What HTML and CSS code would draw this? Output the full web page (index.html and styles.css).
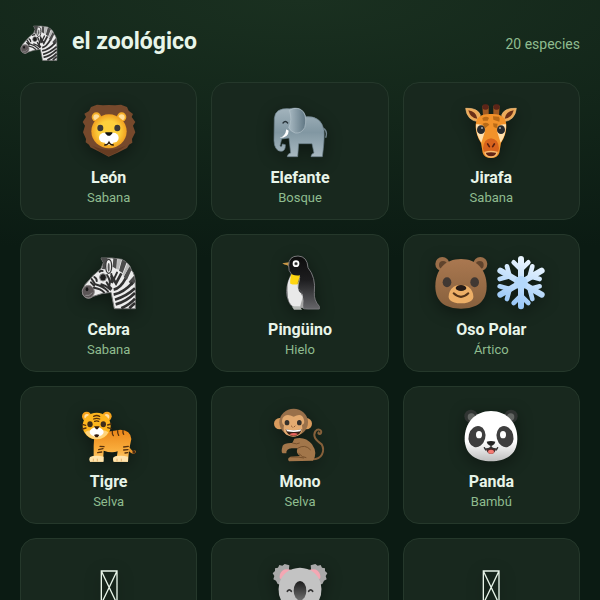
FILE: index.html
```html
<!DOCTYPE html>
<html lang="es">
<head>
  <meta charset="UTF-8" />
  <meta name="viewport" content="width=device-width, initial-scale=1.0" />
  <title>el zoológico</title>
  <link rel="stylesheet" href="styles.css">
</head>
<body>
  <svg class="sprites" aria-hidden="true">
    <defs>
      <radialGradient id="lion-face"><stop offset="0.6" stop-color="#fdd03c" /><stop offset="1" stop-color="#f0a020" /></radialGradient>
      <linearGradient id="elephant-skin" x2="0" y2="1"><stop offset="0" stop-color="#a3b4bd" /><stop offset="0.5" stop-color="#8197a2" /><stop offset="1" stop-color="#a9b9c1" /></linearGradient>
      <linearGradient id="elephant-ear"><stop offset="0" stop-color="#a9bac3" /><stop offset="1" stop-color="#5f7683" /></linearGradient>
      <linearGradient id="bear-face" x2="0" y2="1"><stop offset="0" stop-color="#aa7850" /><stop offset="1" stop-color="#87603d" /></linearGradient>
      <linearGradient id="snow" gradientUnits="userSpaceOnUse" x1="110" y1="10" x2="60" y2="160"><stop offset="0" stop-color="#eef7ff" /><stop offset="1" stop-color="#93c4f7" /></linearGradient>
      <linearGradient id="penguin-back" x2="0" y2="1"><stop offset="0" stop-color="#0c0c0c" /><stop offset="0.45" stop-color="#1d1d1f" /><stop offset="1" stop-color="#66666a" /></linearGradient>
      <linearGradient id="tiger-fur" x2="0" y2="1"><stop offset="0" stop-color="#ea8618" /><stop offset="0.6" stop-color="#f9ab3a" /><stop offset="1" stop-color="#ffcf75" /></linearGradient>
      <linearGradient id="panda-face" x2="0" y2="1"><stop offset="0.6" stop-color="#fff" /><stop offset="1" stop-color="#bdbdbd" /></linearGradient>
      <linearGradient id="koala-nose" x2="0" y2="1"><stop offset="0" stop-color="#1c1c1c" /><stop offset="1" stop-color="#6e6e6e" /></linearGradient>
    </defs>

    <symbol id="leon" viewBox="0 0 168 168">
      <path fill="#76492c" d="M83 161 58 148 28 133 24 125 14 118 15 108 6 88 12 68 5 57 15 42 10 32 24 24 30 12 48 5 66 7 83 6 102 7 120 5 138 12 143 23 156 33 152 42 163 57 156 68 163 88 153 108 154 119 144 125 138 135 108 150Z" />
      <path fill="#663c22" d="M34 128Q60 140 84 140T134 128L108 148 83 159 58 147Z" />
      <circle cx="46" cy="42" r="14" fill="#f5ae27" />
      <circle cx="122" cy="42" r="14" fill="#f5ae27" />
      <circle cx="46" cy="43" r="9" fill="#ffdf9b" />
      <circle cx="122" cy="43" r="9" fill="#ffdf9b" />
      <ellipse cx="84" cy="85" rx="53" ry="51" fill="url(#lion-face)" />
      <ellipse cx="58" cy="75" rx="9" ry="10" fill="#3c3a36" />
      <ellipse cx="109" cy="75" rx="9" ry="10" fill="#3c3a36" />
      <ellipse cx="70" cy="104" rx="16" ry="15" fill="#fff" />
      <ellipse cx="97" cy="104" rx="16" ry="15" fill="#fff" />
      <path fill="#fff" d="M69 108h30l-5 17H74z" />
      <path fill="#111" d="M73 88h21q2 4-7 10h-7q-9-6-7-10z" />
      <path fill="none" stroke="#2a1a0a" stroke-width="4" stroke-linecap="round" d="M71 126q10 0 13-8 3 8 13 8" />
    </symbol>

    <symbol id="elefante" viewBox="0 0 168 168">
      <path fill="none" stroke="#74868f" stroke-width="4" d="M154 76q14 8 7 28" />
      <path fill="url(#elephant-skin)" stroke="#6b7f8a" stroke-width="2" d="M7 45Q10 14 52 17 90 8 102 41 148 38 156 82 158 110 151 161H117q0-8 9-11l-6-28H80l-3 39H46q0-8 10-11l-5-45-22 3-5 20q5 8 7-5l9 2q1 20-13 20-20-2-21-32z" />
      <path fill="url(#elephant-ear)" stroke="#b4c3ca" stroke-width="2" d="M52 22Q78 8 94 26 106 46 98 74 88 92 70 90 56 86 50 74 62 50 52 22z" />
      <path fill="none" stroke="#263238" stroke-width="4" stroke-linecap="round" d="M33 60q7-9 14 0" />
      <path fill="#fff" d="M22 105q18-4 21-26l7 4q0 21-28 22z" />
    </symbol>

    <symbol id="jirafa" viewBox="0 0 168 168">
      <g id="jirafa-mitad">
        <path fill="#edaa59" stroke="#f7c37f" stroke-width="2" d="M8 16Q44 14 52 36L45 56Q12 52 8 16z" />
        <path fill="#6a2e16" d="M16 22q24 4 27 25-21-1-27-25z" />
        <path fill="#a05a22" d="M58 8h19v32H60z" />
        <rect x="58" y="4" width="19" height="16" rx="7" fill="#5d2418" />
      </g>
      <use href="#jirafa-mitad" transform="matrix(-1 0 0 1 168 0)" />
      <path fill="#f2922a" d="M84 33Q132 31 130 72 129 98 114 120L109 149Q104 165 84 165T59 149L54 120Q39 98 38 72 36 31 84 33z" />
      <path fill="#ffe0ad" d="M39 64Q67 60 65 88L55 119Q38 95 39 64zM129 64Q101 60 103 88l10 31q17-24 16-55z" />
      <path fill="#b96a17" d="M58 45q12-7 20 0l-4 8H60zM90 40l18 1q4 6 1 15l-18-6zM59 62q14-6 20 3l-13 11zM90 61l14 1-3 14-9-4z" />
      <path fill="#d8631c" d="M84 106Q62 108 60 136q2 20 24 22 22-2 24-22-2-28-24-30z" />
      <ellipse cx="54" cy="80" rx="12" ry="13" fill="#282a2d" />
      <ellipse cx="114" cy="80" rx="12" ry="13" fill="#282a2d" />
      <circle cx="57" cy="75" r="3" fill="#aaa" />
      <circle cx="111" cy="75" r="3" fill="#aaa" />
      <path fill="none" stroke="#572010" stroke-width="5" stroke-linecap="round" d="M74 123l5 8M94 123l-5 8" />
      <path fill="#612416" stroke="#f8bb70" stroke-width="4" d="M66 148q18-5 36 0-2 13-18 14-16-1-18-14z" />
    </symbol>

    <symbol id="cebra" viewBox="0 0 168 168">
      <path fill="#ececec" stroke="#777" stroke-width="3" stroke-linejoin="round" d="M4 106 12 89 37 61 60 41 67 23 60 9H92L122 13Q147 25 151 45 163 55 163 90V161H100L92 121 90 112 62 116 37 124Q22 136 9 124 3 118 4 106z" />
      <path fill="#4c4c4c" d="M60 9h20l-4 10-4 24-9-1 4-19zM97 10l11 2-2 30-11-7zM123 14l14 8-12 32-11-7zM145 34l6 12-13 28-10-8zM159 62l4 18-10 12-10-12z" />
      <path fill="#b9b9b9" d="M109 12l12 2-8 30-6-2zM139 25l7 9-18 30-2-8z" />
      <ellipse cx="83" cy="34" rx="9" ry="21" fill="#eee" stroke="#333" stroke-width="4" />
      <ellipse cx="83" cy="37" rx="3" ry="13" fill="#555" />
      <ellipse cx="22" cy="110" rx="18" ry="19" fill="#5b5556" stroke="#8c8788" stroke-width="3" />
      <ellipse cx="18" cy="103" rx="4" ry="6" fill="#151515" />
      <path fill="none" stroke="#aaa" stroke-width="2" d="M13 121q12 4 21-8" />
      <g fill="none" stroke="#303030" stroke-width="6" stroke-linecap="round">
        <path d="M40 66q8 5 7 12M32 72l10 15M56 50q6-4 9-2M30 82l9 10M39 98q20 3 30 14M43 88q24 6 38 21M61 88q16 4 27 16M77 82q5 12 14 18M78 60q12 18 7 32M91 57l1 24M108 53L94 82" />
      </g>
      <g fill="none" stroke="#303030" stroke-width="8">
        <path d="M91 62l14 23 16-30M98 104q20-4 36-34M98 119q30-6 57-36M102 134q34-10 60-34M104 148q32-8 58-34M121 160q26-12 41-29M145 160l17-16" />
      </g>
      <ellipse cx="66" cy="67" rx="10" ry="11" fill="#1e1e1e" stroke="#888" stroke-width="3" />
    </symbol>

    <symbol id="pinguino" viewBox="0 0 168 168">
      <path fill="#c99747" d="M31 25l20-3 2 14q-5 0-7-5-11-1-15-6z" />
      <path fill="url(#penguin-back)" stroke="#77777a" stroke-width="3" d="M50 31Q50 3 78 3 106 4 108 38 132 67 127 112 125 136 142 154V162H108Q93 163 90 157L56 150Q40 124 45 96 47 80 58 57 49 49 50 31z" />
      <path fill="#e9e9e9" d="M58 60Q44 80 46 108 46 147 68 158L91 157Q97 142 91 117 75 110 80 91L84 66z" />
      <path fill="#ffd510" d="M58 57q11 6 26 4l-5 25q-10 5-24 0-2-8 3-29z" />
      <path fill="#a5a5a5" d="M91 105q3 18-4 40l-3 12 10 2z" />
      <path fill="#b6b9b6" d="M59 154h24l7 10H66z" />
      <circle cx="72" cy="26" r="10" fill="#fff" />
      <circle cx="72" cy="26" r="5" fill="#555" />
      <circle cx="72" cy="26" r="2" fill="#000" />
      <path fill="none" stroke="#59595c" stroke-width="2" d="M84 66q-8 15-5 33 11 10 11 22" />
    </symbol>

    <symbol id="oso" viewBox="0 0 168 168">
      <circle cx="28" cy="27" r="21" fill="#9b6e49" />
      <circle cx="142" cy="27" r="21" fill="#9b6e49" />
      <circle cx="30" cy="30" r="12" fill="#60432c" />
      <circle cx="140" cy="30" r="12" fill="#60432c" />
      <path fill="url(#bear-face)" d="M84 12C132 12 161 45 161 94 161 142 130 161 84 161S7 142 7 94C7 45 36 12 84 12z" />
      <ellipse cx="42" cy="82" rx="13" ry="15" fill="#403833" />
      <ellipse cx="125" cy="82" rx="13" ry="15" fill="#403833" />
      <path fill="#edaf67" d="M84 90Q108 88 118 110 132 144 84 145 36 144 50 110 60 88 84 90z" />
      <ellipse cx="84" cy="99" rx="16" ry="9" fill="#251b17" />
      <path fill="none" stroke="#533218" stroke-width="6" stroke-linecap="round" d="M62 115q22 21 44 0" />
    </symbol>

    <symbol id="nieve" viewBox="0 0 168 168">
      <g fill="none" stroke="url(#snow)" stroke-width="18" stroke-linecap="round" stroke-linejoin="round">
        <path d="M84 12V154M22 47L146 119M22 119L146 47" />
        <path stroke-width="14" d="M62 22l22 22 22-22M62 144l22-22 22 22M20 72l30-8-8-30M118 132l-8-30 30-8M20 94l30 8-8 30M118 34l-8 30 30 8" />
      </g>
      <circle cx="84" cy="83" r="20" fill="#b4d8fb" />
    </symbol>

    <symbol id="tigre" viewBox="0 0 168 168">
      <path fill="none" stroke="#e9972c" stroke-width="8" stroke-linecap="round" d="M143 125q12 16 18 9" />
      <circle cx="159" cy="135" r="5" fill="#4c2c14" />
      <path fill="url(#tiger-fur)" d="M40 84Q80 72 118 68 149 69 151 96L144 130 141 164H98Q93 150 108 146L110 133Q92 140 68 131L66 164H27Q22 151 38 146L38 116z" />
      <path fill="#ffe4ad" d="M27 150q18-7 41-1v15H27q-5-7 0-14zM98 150q18-7 43-1v15H98q-5-7 0-14z" />
      <circle cx="17" cy="28" r="14" fill="#f6a31b" />
      <circle cx="78" cy="28" r="14" fill="#f6a31b" />
      <circle cx="18" cy="29" r="8" fill="#ffe0a4" />
      <circle cx="77" cy="29" r="8" fill="#ffe0a4" />
      <ellipse cx="47" cy="57" rx="42" ry="40" fill="#fdb51e" />
      <path fill="#ffd47c" d="M12 76q10-8 20-6h30q10-2 20 6-9 20-35 21-26-1-35-21z" />
      <ellipse cx="27" cy="52" rx="8" ry="9" fill="#3e2d1b" />
      <ellipse cx="67" cy="52" rx="8" ry="9" fill="#3e2d1b" />
      <ellipse cx="47" cy="75" rx="21" ry="14" fill="#fff" />
      <path fill="#30190f" d="M39 58h17l-6 9h-5zM39 84q8-5 16 0l-5 7h-6z" />
      <g fill="none" stroke="#57310d" stroke-width="4" stroke-linecap="round">
        <path d="M38 28q9-5 18 0M38 36q9-4 18 0M41 43q6-3 12 0M4 52l10 3M4 66l11-3M80 54l10-3M80 62l10 3M94 73q-1 7 3 13M110 71q-1 8 3 14M126 71q-1 7 2 11M57 118l12 1M53 128l13-3M50 137l12-2M128 120l14-2M128 129l13-1M132 138l8-1" />
      </g>
      <path fill="none" stroke="#d99a4c" stroke-width="2" d="M37 155v8M49 155v8M108 155v8M121 155v8" />
    </symbol>

    <symbol id="mono" viewBox="0 0 168 168">
      <path fill="none" stroke="#86603a" stroke-width="6" stroke-linecap="round" d="M122 157C149 157 160 133 149 112 130 98 122 88 130 73 139 62 151 70 147 78 144 84 136 80 140 76" />
      <path fill="#a2764a" d="M67 95Q99 86 120 112 138 138 123 161L51 163Q44 154 55 150L84 147Q69 137 77 124L59 124Q42 126 43 139L32 139Q26 136 32 116 38 107 61 108z" />
      <path fill="none" stroke="#76502c" stroke-width="3" d="M77 124q22-14 39 5M61 108q14 5 22 0M55 150q27-1 41 3M80 139q11 13 23 13" />
      <circle cx="23" cy="50" r="17" fill="#d99b5d" />
      <circle cx="103" cy="50" r="17" fill="#d99b5d" />
      <ellipse cx="65" cy="46" rx="43" ry="41" fill="#99704a" />
      <path fill="#e3aa70" d="M65 29Q91 15 96 39 99 51 90 54 96 88 63 89 29 87 36 55 26 49 32 33 42 17 65 29z" />
      <ellipse cx="45" cy="47" rx="7" ry="8" fill="#34302c" />
      <ellipse cx="82" cy="47" rx="7" ry="8" fill="#34302c" />
      <path fill="none" stroke="#8c5935" stroke-width="3" stroke-linecap="round" d="M58 57l3 3M69 57l-3 3" />
      <path fill="#382017" d="M41 67q23 6 48 0-4 20-24 20T41 67z" />
      <path fill="#fff" d="M42 67q23 6 46 0l-3 6q-20 4-40 0z" />
      <path fill="#e9635c" d="M52 82q13-7 26-1-12 10-26 1z" />
    </symbol>

    <symbol id="panda" viewBox="0 0 168 168">
      <circle cx="24" cy="28" r="20" fill="#303432" />
      <circle cx="144" cy="28" r="20" fill="#303432" />
      <circle cx="25" cy="30" r="11" fill="#626562" />
      <circle cx="143" cy="30" r="11" fill="#626562" />
      <path fill="url(#panda-face)" d="M84 12C132 12 164 48 163 97 162 143 129 163 84 163S6 143 5 97C4 48 36 12 84 12z" />
      <ellipse cx="42" cy="89" rx="25" ry="32" fill="#3e3e3e" transform="rotate(15 42 89)" />
      <ellipse cx="126" cy="89" rx="25" ry="32" fill="#3e3e3e" transform="rotate(-15 126 89)" />
      <ellipse cx="48" cy="83" rx="9" ry="11" fill="#fff" />
      <ellipse cx="120" cy="83" rx="9" ry="11" fill="#fff" />
      <path fill="#222" d="M71 104q13-4 26 0-1 9-10 12h-6q-9-3-10-12z" />
      <path fill="#4e2828" d="M69 126q10 0 15-5 5 5 15 5-4 15-15 15t-15-15z" />
      <ellipse cx="84" cy="134" rx="9" ry="6" fill="#f57b73" />
      <path fill="none" stroke="#333" stroke-width="4" stroke-linecap="round" d="M84 114v6q-5 7-18 5M84 120q5 7 18 5M64 122l4 7M104 122l-4 7" />
    </symbol>

    <symbol id="koala" viewBox="0 0 168 168">
      <g id="koala-oreja">
        <path fill="#a9a9a9" d="M52 19 38 15 31 20 22 18 18 26 9 28 9 36 2 43 7 51 4 61 12 65 17 75 28 77 47 72z" />
        <path fill="#f4a7b3" d="M57 32Q38 28 31 35 20 45 24 59L36 61z" />
      </g>
      <use href="#koala-oreja" transform="matrix(-1 0 0 1 168 0)" />
      <path fill="#c3c3c3" d="M84 26Q132 28 146 72 155 112 131 137 112 150 84 150T37 137Q13 112 22 72 36 28 84 26z" />
      <ellipse cx="84" cy="95" rx="19" ry="29" fill="url(#koala-nose)" />
      <path fill="none" stroke="#333" stroke-width="5" stroke-linecap="round" d="M46 97q6-9 12 0M110 97q6-9 12 0M70 132q14 7 28 0" />
    </symbol>

    <symbol id="sin-icono" viewBox="0 0 168 168">
      <path fill="none" stroke="#e8f5e9" stroke-width="4" d="M61 36h47v98H61zl47 98M108 36L61 134" />
    </symbol>
  </svg>

  <header class="header">
    <h1 class="brand"><svg class="brand-icon" aria-hidden="true"><use href="#cebra" /></svg>el zoológico</h1>
    <span class="count">20 especies</span>
  </header>

  <main class="grid">
    <article class="card">
      <div class="emoji"><svg><use href="#leon" /></svg></div>
      <h2 class="name">León</h2>
      <p class="habitat">Sabana</p>
    </article>
    <article class="card">
      <div class="emoji"><svg><use href="#elefante" /></svg></div>
      <h2 class="name">Elefante</h2>
      <p class="habitat">Bosque</p>
    </article>
    <article class="card">
      <div class="emoji"><svg><use href="#jirafa" /></svg></div>
      <h2 class="name">Jirafa</h2>
      <p class="habitat">Sabana</p>
    </article>
    <article class="card">
      <div class="emoji"><svg><use href="#cebra" /></svg></div>
      <h2 class="name">Cebra</h2>
      <p class="habitat">Sabana</p>
    </article>
    <article class="card">
      <div class="emoji"><svg><use href="#pinguino" /></svg></div>
      <h2 class="name">Pingüino</h2>
      <p class="habitat">Hielo</p>
    </article>
    <article class="card">
      <div class="emoji"><svg><use href="#oso" /></svg><svg><use href="#nieve" /></svg></div>
      <h2 class="name">Oso Polar</h2>
      <p class="habitat">Ártico</p>
    </article>
    <article class="card">
      <div class="emoji"><svg><use href="#tigre" /></svg></div>
      <h2 class="name">Tigre</h2>
      <p class="habitat">Selva</p>
    </article>
    <article class="card">
      <div class="emoji"><svg><use href="#mono" /></svg></div>
      <h2 class="name">Mono</h2>
      <p class="habitat">Selva</p>
    </article>
    <article class="card">
      <div class="emoji"><svg><use href="#panda" /></svg></div>
      <h2 class="name">Panda</h2>
      <p class="habitat">Bambú</p>
    </article>
    <article class="card">
      <div class="emoji"><svg><use href="#sin-icono" /></svg></div>
      <h2 class="name">Perezoso</h2>
      <p class="habitat">Selva</p>
    </article>
    <article class="card">
      <div class="emoji"><svg><use href="#koala" /></svg></div>
      <h2 class="name">Koala</h2>
      <p class="habitat">Bosque</p>
    </article>
    <article class="card">
      <div class="emoji"><svg><use href="#sin-icono" /></svg></div>
      <h2 class="name">Flamenco</h2>
      <p class="habitat">Laguna</p>
    </article>
  </main>
</body>
</html>
```
FILE: styles.css
```css
* {
  box-sizing: border-box;
  margin: 0;
  padding: 0;
}

body {
  font-family: Roboto, sans-serif;
  color: #e8f5e9;
  background: #0b1b13 radial-gradient(900px 260px at 50% 0, #1a3020, #0b1b13) no-repeat;
  min-height: 100vh;
  padding: 20px;
}

.sprites {
  position: absolute;
  width: 0;
  height: 0;
}

.header {
  display: flex;
  align-items: baseline;
  justify-content: space-between;
  margin-bottom: 18px;
}

.brand {
  font-size: 23px;
  line-height: 44px;
  font-weight: 700;
}

.brand-icon {
  width: 38px;
  height: 38px;
  margin-right: 14px;
  vertical-align: middle;
}

.count {
  font-size: 14px;
  color: #8fbc8f;
}

.grid {
  display: grid;
  grid-template-columns: repeat(3, 1fr);
  gap: 14px;
}

.card {
  padding: 20px 12px 13px;
  text-align: center;
  background: #18281e;
  border: 1px solid #25382b;
  border-radius: 16px;
}

.emoji {
  display: flex;
  justify-content: center;
  gap: 4px;
  margin-bottom: 8px;
  filter: drop-shadow(0 4px 8px rgba(0, 0, 0, 0.4));
}

.emoji svg {
  width: 56px;
  height: 56px;
}

.name {
  font-size: 16px;
  line-height: 22px;
  font-weight: 700;
  margin-bottom: 1px;
}

.habitat {
  font-size: 13px;
  line-height: 16px;
  color: #8fbc8f;
}
```
